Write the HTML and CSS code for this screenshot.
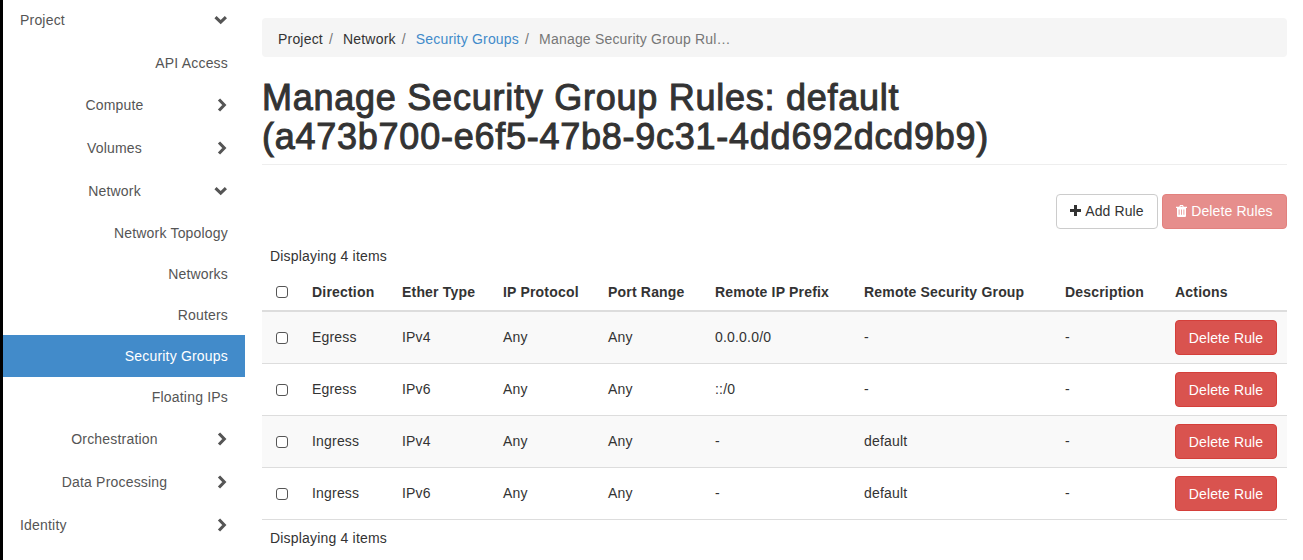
FILE: index.html
```html
<!DOCTYPE html>
<html lang="en">
<head>
<meta charset="utf-8">
<title>Manage Security Group Rules</title>
<link rel="stylesheet" href="styles.css">
</head>
<body>
<svg class="defs" width="0" height="0">
  <symbol id="down" viewBox="0 0 14 10"><path d="M1.500 2.200 6.700 7.200l5.200-5" fill="none" stroke="currentColor" stroke-width="3.100"/></symbol>
  <symbol id="right" viewBox="0 0 10 14"><path d="M2 1.500 7.300 7 2 12.500" fill="none" stroke="currentColor" stroke-width="3.100"/></symbol>
</svg>
<div class="page">
  <nav class="sidebar">
    <a class="item root first"><span>Project</span><svg class="down"><use href="#down"/></svg></a>
    <a class="item leaf api"><span>API Access</span></a>
    <a class="item group"><span>Compute</span><svg class="right"><use href="#right"/></svg></a>
    <a class="item group"><span>Volumes</span><svg class="right"><use href="#right"/></svg></a>
    <a class="item group"><span>Network</span><svg class="down"><use href="#down"/></svg></a>
    <a class="item leaf"><span>Network Topology</span></a>
    <a class="item leaf"><span>Networks</span></a>
    <a class="item leaf"><span>Routers</span></a>
    <a class="item leaf active"><span>Security Groups</span></a>
    <a class="item leaf last"><span>Floating IPs</span></a>
    <a class="item group"><span>Orchestration</span><svg class="right"><use href="#right"/></svg></a>
    <a class="item group"><span>Data Processing</span><svg class="right"><use href="#right"/></svg></a>
    <a class="item root identity"><span>Identity</span><svg class="right"><use href="#right"/></svg></a>
  </nav>
  <main class="content">
    <ol class="breadcrumb">
      <li>Project</li><li>Network</li><li><a>Security Groups</a></li><li class="current">Manage Security Group Rul…</li>
    </ol>
    <h1 class="title">Manage Security Group Rules: default<br>(a473b700-e6f5-47b8-9c31-4dd692dcd9b9)</h1>
    <div class="actions">
      <button class="btn add"><svg class="plus" viewBox="0 0 11 11"><path d="M4 0h3v4h4v3H7v4H4V7H0V4h4z" fill="currentColor"/></svg><span>Add Rule</span></button>
      <button class="btn danger disabled"><svg class="trash" viewBox="0 0 11 12"><path fill="currentColor" fill-rule="evenodd" d="M3.300 1.800 4 0h3l.7 1.800H11v1.100h-1V11q0 1-1 1H2q-1 0-1-1V2.900H0V1.800zM4.400 1.800h2.200L6.300.9H4.700zM2.700 4.500v5.200h.8V4.500zM5.100 4.500v5.200h.8V4.500zM7.500 4.500v5.200h.8V4.500z"/></svg><span>Delete Rules</span></button>
    </div>
    <p class="count">Displaying 4 items</p>
    <table class="rules">
      <colgroup><col class="c1"><col class="c2"><col class="c3"><col class="c4"><col class="c5"><col class="c6"><col class="c7"><col class="c8"><col class="c9"></colgroup>
      <thead><tr><th><i class="check"></i></th><th>Direction</th><th>Ether Type</th><th>IP Protocol</th><th>Port Range</th><th>Remote IP Prefix</th><th>Remote Security Group</th><th>Description</th><th>Actions</th></tr></thead>
      <tbody>
        <tr><td><i class="check"></i></td><td>Egress</td><td>IPv4</td><td>Any</td><td>Any</td><td>0.0.0.0/0</td><td>-</td><td>-</td><td><button class="btn danger">Delete Rule</button></td></tr>
        <tr><td><i class="check"></i></td><td>Egress</td><td>IPv6</td><td>Any</td><td>Any</td><td>::/0</td><td>-</td><td>-</td><td><button class="btn danger">Delete Rule</button></td></tr>
        <tr><td><i class="check"></i></td><td>Ingress</td><td>IPv4</td><td>Any</td><td>Any</td><td>-</td><td>default</td><td>-</td><td><button class="btn danger">Delete Rule</button></td></tr>
        <tr><td><i class="check"></i></td><td>Ingress</td><td>IPv6</td><td>Any</td><td>Any</td><td>-</td><td>default</td><td>-</td><td><button class="btn danger">Delete Rule</button></td></tr>
      </tbody>
    </table>
    <p class="count foot">Displaying 4 items</p>
  </main>
</div>
</body>
</html>
```

FILE: styles.css
```css
* { box-sizing: border-box; }
body {
  margin: 0;
  background: #fff;
  color: #333;
  font: 14px/20px "Liberation Sans", Arial, sans-serif;
  letter-spacing: 0.19px;
  overflow: hidden;
}
.defs { display: block; height: 0; }
.page { display: flex; height: 560px; border-left: 3px solid #000; overflow: hidden; }

.sidebar { width: 242px; flex: none; color: #555; }
.item { display: flex; align-items: center; justify-content: space-between; height: 42.800px; padding: 0 17px; }
.item span { white-space: nowrap; }
.item svg { flex: none; }
.item.first { height: 41px; padding-bottom: 2px; }
.item.leaf { height: 41px; justify-content: flex-end; }
.item.api { height: 43px; }
.item.active { height: 42px; background: #428bca; color: #fff; }
.item.last { height: 40px; }
.item.identity { height: 44px; }
.group span { width: 189px; text-align: center; }
.down { width: 14px; height: 10px; }
.right { width: 10px; height: 14px; margin-right: 1px; }

.content { flex: none; width: 1025px; margin: 18px 0 0 17px; }
.breadcrumb {
  display: flex;
  height: 39px;
  margin: 0;
  padding: 11px 16px 8px;
  border-radius: 4px;
  background: #f5f5f5;
  list-style: none;
}
.breadcrumb li + li::before { content: "/"; padding: 0 10px 0 6px; color: #777; }
.breadcrumb a { color: #428bca; }
.breadcrumb .current { color: #777; }
.title {
  height: 108px;
  margin: 0;
  padding-top: 21px;
  border-bottom: 1px solid #eee;
  font-size: 36px;
  font-weight: 400;
  line-height: 39px;
  letter-spacing: 0.750px;
  white-space: nowrap;
  -webkit-text-stroke: 1px #333;
}
.actions { display: flex; justify-content: flex-end; gap: 4px; margin-top: 29px; }
.btn {
  display: flex;
  align-items: center;
  justify-content: center;
  gap: 4px;
  width: 102px;
  height: 35px;
  padding: 0;
  border: 1px solid #ccc;
  border-radius: 4px;
  background: #fff;
  color: #333;
  font: inherit;
  letter-spacing: 0.110px;
  white-space: nowrap;
}
.actions .btn { padding-bottom: 2px; }
.danger { background: #d9534f; border-color: #d43f3a; color: #fff; }
.disabled { width: 125px; opacity: 0.65; }
.plus { width: 11px; height: 11px; }
.trash { width: 11px; height: 12px; }
.count { margin: 17px 0 0; padding-left: 8px; }
.rules { width: 1025px; margin-top: 7px; border-collapse: separate; border-spacing: 0; table-layout: fixed; }
.c1 { width: 40px; } .c2 { width: 90px; } .c3 { width: 101px; }
.c4 { width: 105px; } .c5 { width: 107px; } .c6 { width: 149px; }
.c7 { width: 201px; } .c8 { width: 110px; } .c9 { width: 122px; }
.rules th, .rules td { padding: 0 10px; text-align: left; white-space: nowrap; }
.rules th { height: 39px; border-bottom: 2px solid #ddd; }
.rules td { height: 52px; padding-bottom: 2px; border-bottom: 1px solid #ddd; }
.rules td:first-child, .rules td:last-child { padding-bottom: 0; }
.rules th:first-child { padding-top: 1px; }
.rules tbody tr:nth-child(odd) { background: #f9f9f9; }
.check { display: block; width: 12px; height: 12px; margin-left: 4px; border: 1px solid #555; border-radius: 3px; background: #fff; }
.foot { margin-top: 8px; }
```
